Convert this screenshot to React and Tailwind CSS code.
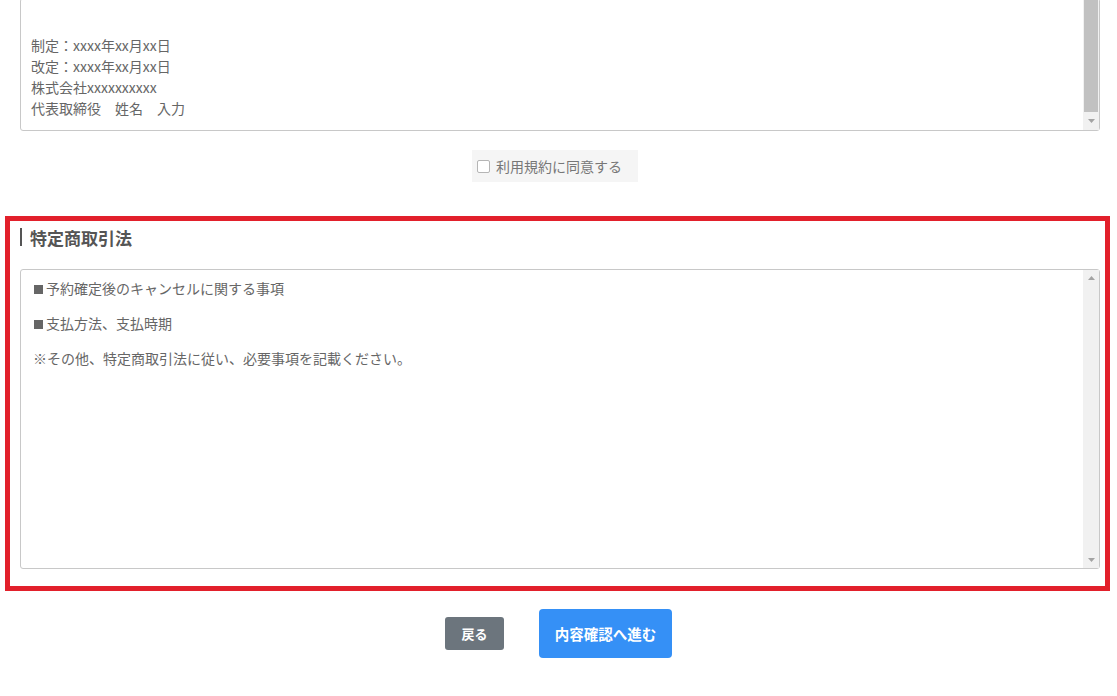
import React from "react";

const font = { fontFamily: '"Noto Sans CJK JP", "Noto Sans", sans-serif' };

function Arrow({ up }) {
  return (
    <svg width="7" height="4" viewBox="0 0 7 4">
      {up ? <path d="M0 4 L3.5 0 L7 4 Z" fill="#a3a3a3" /> : <path d="M0 0 L3.5 4 L7 0 Z" fill="#a3a3a3" />}
    </svg>
  );
}

function Sq() {
  return <span className="inline-block w-[9px] h-[9px] bg-[#666] mr-[3px] ml-[1px] align-[0px]" />;
}

export default function App() {
  return (
    <div className="w-[1117px] h-[696px] bg-white overflow-hidden text-[#666]" style={font}>
      {/* top textarea (scrolled) */}
      <div className="ml-[20px] mr-[17px] mt-[-2px] h-[133px] border border-[#c8c8c8] rounded-[3px] relative bg-white">
        <div className="pl-[10px] pt-[36px] text-[14px] leading-[21px]">
          <div>制定：xxxx年xx月xx日</div>
          <div>改定：xxxx年xx月xx日</div>
          <div>株式会社xxxxxxxxxx</div>
          <div>代表取締役　姓名　入力</div>
        </div>
        <div className="absolute right-0 top-0 bottom-0 w-[16px] bg-[#f1f1f1] flex flex-col items-center">
          <div className="w-[14px] h-[113px] bg-[#c1c1c1]" />
          <div className="flex-1 flex items-center justify-center">
            <Arrow />
          </div>
        </div>
      </div>

      {/* agree checkbox */}
      <div className="flex justify-center mt-[19px] pr-[7px]">
        <label className="flex items-center h-[32px] w-[166px] bg-[#f5f5f5] pl-[5px] gap-[6px] text-[14px] text-[#777]">
          <span className="w-[13px] h-[13px] border border-[#b5b5b5] rounded-[2px] bg-white" />
          <span>利用規約に同意する</span>
        </label>
      </div>

      {/* red framed section */}
      <div className="mt-[34px] ml-[5px] mr-[7px] border-[5px] border-[#e2202b] pl-[10px] pr-[5px] pt-[4px] pb-[17px]">
        <div className="h-[24px] flex items-center gap-[8px]">
          <div className="w-[2px] h-[18px] bg-[#555]" />
          <div className="text-[17px] font-bold text-[#555] leading-none">特定商取引法</div>
        </div>
        <div className="mt-[20px] h-[300px] border border-[#c8c8c8] rounded-[3px] relative bg-white">
          <div className="pl-[12px] pt-[8px] text-[14px] leading-[20px] flex flex-col gap-[15px]">
            <div><Sq />予約確定後のキャンセルに関する事項</div>
            <div><Sq />支払方法、支払時期</div>
            <div>※その他、特定商取引法に従い、必要事項を記載ください。</div>
          </div>
          <div className="absolute right-0 top-0 bottom-0 w-[16px] bg-[#f1f1f1] flex flex-col items-center justify-between py-[6px]">
            <Arrow up />
            <Arrow />
          </div>
        </div>
      </div>

      {/* buttons */}
      <div className="mt-[18px] flex justify-center items-center gap-[35px]">
        <button className="w-[59px] h-[33px] rounded-[3px] bg-[#6c757d] text-white text-[13px] font-bold">
          戻る
        </button>
        <button className="w-[133px] h-[49px] rounded-[4px] bg-[#3590f6] text-white text-[14.5px] font-bold">
          内容確認へ進む
        </button>
      </div>
    </div>
  );
}
